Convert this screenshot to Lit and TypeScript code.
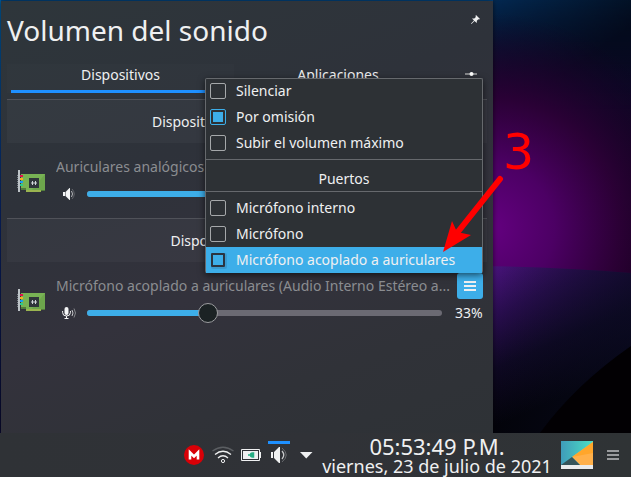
import { LitElement, html, css, svg } from "lit";
import { customElement, property } from "lit/decorators.js";

const cardIcon = svg`
  <path d="M4 4h24v17h-4v1H9v-2H4z" fill="#78b254"/>
  <path d="M28 4v17H14z" fill="#669e47" opacity=".6"/>
  <path d="M4 18h5v2H4zM24 20h4v1h-4z" fill="#507b3b"/>
  <rect x="9" y="20" width="15" height="2" fill="#9ab450"/>
  <rect x="3" y="5" width="3" height="2" fill="#e01050"/>
  <rect x="3" y="8" width="3" height="2" fill="#f6b020"/>
  <rect x="3" y="11" width="3" height="2" fill="#1d99f3"/>
  <rect x="3" y="14" width="3" height="2" fill="#2cc98a"/>
  <path d="M.5 5v13" stroke="#9aa3a9" stroke-dasharray="1 1" opacity=".7"/>
  <rect x="1" y="0" width="2" height="22" fill="#bdc3c7"/>
  <rect x="12" y="8" width="10" height="10" fill="#2f353a"/>
  <path d="M14 13h6M15.500 11v4M18.500 11v4" stroke="#cfd4d8" fill="none"/>`;

@customElement("check-item")
class CheckItem extends LitElement {
  @property() label = "";
  @property({ type: Boolean, reflect: true }) checked = false;
  @property({ type: Boolean, reflect: true }) current = false;
  static styles = css`
    :host { display: flex; align-items: center; height: 26px; padding-left: 4px; color: #eff0f1; }
    .box { box-sizing: border-box; width: 16px; height: 16px; border: 1px solid #a5a8aa; border-radius: 2px; padding: 2px; margin-right: 10px; flex: none; }
    :host([checked]) .box { border-color: #3daee9; }
    :host([checked]) .box::before { content: ""; display: block; width: 10px; height: 10px; background: #3daee9; }
    :host([current]) { background: #3daee9; }
    :host([current]) .box { width: 14px; height: 14px; border: 2px solid #2b3440; border-radius: 1px; margin: 0 11px 0 1px; box-shadow: 1px 1px 0 1px #3a9bd0; }
  `;
  render() { return html`<span class="box"></span><span>${this.label}</span>`; }
}

@customElement("volume-slider")
class VolumeSlider extends LitElement {
  @property({ type: Number }) value = 0;
  static styles = css`
    :host { display: block; flex: none; position: relative; width: 355px; height: 6px; border-radius: 3px; background: #6b6a73; }
    .fill { height: 6px; border-radius: 3px; background: #3daee9; }
    .knob { position: absolute; top: -7px; box-sizing: border-box; width: 20px; height: 20px; margin-left: -10px; border-radius: 50%; background: #1b2224; border: 1px solid #9b9c9f; }
  `;
  render() {
    return html`<div class="fill" style="width:${this.value}%"></div><div class="knob" style="left:${this.value}%"></div>`;
  }
}

@customElement("app-root")
class AppRoot extends LitElement {
  static styles = css`
    :host { display: block; position: relative; box-sizing: border-box; width: 631px; height: 477px; overflow: hidden; font: 14px/20px "Noto Sans", sans-serif; color: #eff0f1; background: #03040b; }
    svg { display: block; flex: none; }
    .wall { position: absolute; inset: 0; }
    .desk { position: relative; height: 433px; box-sizing: border-box; padding: 1px 0 0 1px; }
    .panel { box-sizing: border-box; width: 492px; height: 432px; padding: 0 6px; background: linear-gradient(160deg, #2e363b 0%, #2e323a 35%, #33323c 60%, #303238 80%, #2e3236 100%); box-shadow: 0 0 5px rgba(0,0,0,.6); }
    .head { display: flex; justify-content: space-between; height: 63px; }
    h1 { margin: 9px 0 0; font-size: 28px; line-height: 40px; font-weight: 400; white-space: nowrap; }
    .pin { margin: 14px 7px 0 0; }
    .tabs { display: flex; height: 35px; border-bottom: 1px solid #505259; }
    .tab { width: 227px; text-align: center; height: 29px; line-height: 21px; }
    .tab.on { background: rgba(255,255,255,.012); }
    .tab.on::after { content: ""; display: block; height: 3px; margin: 5px 0 0 4px; width: 222px; background: #1e90ff; }
    .tab.two { width: 208px; }
    .conf { margin: 6px 0 0 23px; }
    .section { display: flex; justify-content: center; height: 43px; line-height: 43px; background: rgba(255,255,255,.03); white-space: nowrap; }
    .section.in { padding-left: 1px; }
    .device { display: flex; height: 75px; }
    .card { margin: 27px 11px 0 10px; }
    .info { width: 427px; }
    .name { height: 28px; display: flex; align-items: center; justify-content: space-between; margin-top: 10px; color: #8b8d91; white-space: nowrap; }
    .name .t { width: 394px; overflow: hidden; }
    .btn { width: 26px; height: 26px; border-radius: 3px; background: #3daee9; display: flex; align-items: center; justify-content: center; }
    .vol { height: 26px; display: flex; align-items: center; }
    .vol .ic { flex: none; width: 25px; margin: 0 0 0 6px; }
    .pct { margin-left: 13px; }
    .rule { height: 1px; background: #505259; }
    .menu { position: absolute; left: 205px; top: 78px; box-sizing: border-box; width: 278px; height: 195px; border: 1px solid #66696d; border-bottom-color: #58bdf0; border-radius: 2px; background: #2d3135; box-shadow: 0 2px 7px rgba(0,0,0,.6); }
    .menu check-item:first-child { margin-top: -1px; }
    .menu .title { height: 31px; line-height: 37px; text-align: center; border: solid #66696d; border-width: 1px 0; margin: 3px 0; }
    .mark { position: absolute; left: 0; top: 0; }
    .three { position: absolute; left: 503px; top: 124px; font: 49px/58px "DejaVu Sans", sans-serif; color: #f00; }
    .bar { position: relative; display: flex; height: 44px; background: linear-gradient(90deg, #2f3236, #303237 50%, #2f3335); }
    .tray { display: flex; align-items: flex-start; padding-left: 184px; width: 134px; }
    .clock { width: 238px; text-align: center; white-space: nowrap; }
    .time { font-size: 22px; line-height: 24px; margin-top: 1px; }
    .date { font-size: 18px; line-height: 18px; margin: -1px -10px 0; }
    .end { display: flex; }
  `;

  device(name: string, mic: boolean, value: number) {
    return html`<div class="device">
      <svg class="card" width="28" height="22" viewBox="0 0 28 22">${cardIcon}</svg>
      <div class="info">
        <div class="name"><span class="t">${name}</span>${mic ? html`<span class="btn"><svg width="12" height="10" viewBox="0 0 12 10"><path d="M0 1h12M0 5h12M0 9h12" stroke="#eff0f1" stroke-width="2"/></svg></span>` : ""}</div>
        <div class="vol"><span class="ic">${mic
          ? html`<svg width="15" height="12" viewBox="0 0 15 12" fill="none" stroke="#f4f5f6"><rect x="2.500" y="0" width="4" height="8" rx="2" fill="#f4f5f6" stroke="none"/><path d="M.6 4v1.500q0 3.500 3.900 3.500t3.900-3.500V4M4.500 9v2.500M2.500 11.500h4"/><path d="M10 3q2 3 0 6" stroke="#c5c6c9"/><path d="M12 1.500q3 4.500 0 9" stroke="#85878b"/></svg>`
          : html`<svg width="14" height="12" viewBox="-1 0 14 12" fill="none"><path d="M0 4h2v4H0zM2.500 4l4-4H7v12h-.5l-4-4z" fill="#f4f5f6"/><path d="M8.500 3q2 3 0 6" stroke="#b8b9bc"/><path d="M9 1q4.500 5 0 10" stroke="#64666b"/></svg>`}</span>
          <volume-slider .value=${value}></volume-slider><span class="pct">${mic ? "33%" : ""}</span></div>
      </div></div>`;
  }

  render() {
    return html`
      <svg class="wall" width="631" height="477" viewBox="0 0 631 477">
        <defs>
          <radialGradient id="p" gradientUnits="userSpaceOnUse" cx="490" cy="228" r="215"><stop offset="0" stop-color="#640080"/><stop offset=".3" stop-color="#4c0064"/><stop offset=".6" stop-color="#2e0038" stop-opacity=".9"/><stop offset="1" stop-color="#180023" stop-opacity="0"/></radialGradient>
          <linearGradient id="t" x1="0" y1="0" x2="1" y2=".25"><stop offset="0" stop-color="#00549a"/><stop offset=".74" stop-color="#033a70"/><stop offset="1" stop-color="#020b18"/></linearGradient>
          <linearGradient id="tf" x1="0" y1="0" x2="0" y2="1"><stop offset="0" stop-color="#fff"/><stop offset="1" stop-color="#000"/></linearGradient>
          <mask id="tm"><rect width="631" height="110" fill="url(#tf)"/></mask>
          <linearGradient id="v" gradientUnits="userSpaceOnUse" x1="485" y1="265" x2="545" y2="405"><stop offset="0" stop-color="#4c1480"/><stop offset=".32" stop-color="#2a0d50"/><stop offset=".65" stop-color="#0e0822"/><stop offset="1" stop-color="#03030a"/></linearGradient>
          <linearGradient id="f" gradientUnits="userSpaceOnUse" x1="493" y1="0" x2="631" y2="0"><stop offset="0" stop-color="#080d20" stop-opacity="0"/><stop offset="1" stop-color="#0a0b22" stop-opacity=".9"/></linearGradient>
          <linearGradient id="l" x1="0" y1="0" x2="0" y2="1"><stop offset="0" stop-color="#005d9f"/><stop offset=".5" stop-color="#09246a"/><stop offset="1" stop-color="#0a0a30"/></linearGradient>
          <linearGradient id="s" x1="0" y1="0" x2="0" y2="1"><stop offset="0" stop-color="#030c1e"/><stop offset=".3" stop-color="#0b0826"/><stop offset="1" stop-color="#120018"/></linearGradient>
        </defs>
        <rect width="631" height="275" fill="url(#s)"/>
        <rect width="631" height="110" fill="url(#t)" mask="url(#tm)" opacity=".6"/>
        <rect width="631" height="290" fill="url(#p)"/>
        <path d="M480 266Q560 267 631 273V440H480z" fill="url(#v)"/>
        <path d="M480 266Q560 267 631 273V380L540 433H493z" fill="url(#f)" opacity=".7"/>
        <path d="M540 433Q575 385 631 346V440H540z" fill="#020003"/>
        <rect width="493" height="1" fill="#00447f"/><rect width="1" height="433" fill="url(#l)"/>
      </svg>
      <div class="desk">
        <div class="panel">
          <div class="head"><h1>Volumen del sonido</h1>
            <svg class="pin" width="9" height="9" viewBox="0 0 9 9"><path d="M5 0l4 4-1 .5-.7-.3-1.500 1.600V8L3.500 6 .5 9 0 8.500l3-3L1 3.500h2.300L4.900 2 4.500 1z" fill="#eff0f1"/></svg></div>
          <div class="tabs"><div class="tab on">Dispositivos</div><div class="tab two">Aplicaciones</div>
            <svg class="conf" width="13" height="8" viewBox="0 0 13 8"><path d="M0 4h12" stroke="#85878a" stroke-width="2"/><circle cx="6.500" cy="4" r="2" fill="#fff"/></svg></div>
          <div class="section">Dispositivos de reproducción</div>
          ${this.device("Auriculares analógicos", false, 50)}
          <div class="rule"></div>
          <div class="section in">Dispositivos de entrada</div>
          ${this.device("Micrófono acoplado a auriculares (Audio Interno Estéreo a...", true, 34)}
        </div>
      </div>
      <div class="bar">
        <div class="tray">
          <svg width="134" height="44" viewBox="184 433 134 44" fill="none">
            <circle cx="194" cy="455" r="10" fill="#d90007"/><path d="M190 459.500v-7l4 4 4-4v7" stroke="#fff" stroke-width="2.600"/>
            <path d="M212.500 451q10.500-7.500 21 0" stroke="#5b5e62" stroke-width="1.300"/><path d="M215 454.500q8-6.500 16 0" stroke="#eff0f1" stroke-width="1.300"/><path d="M218 458q5-4.500 10 0" stroke="#eff0f1" stroke-width="1.300"/><circle cx="223" cy="461" r="1.600" stroke="#eff0f1"/>
            <path d="M241.500 449.500h18v11h-18z" stroke="#eff0f1"/><path d="M243 451h15v8h-15z" fill="#eff0f1"/><path d="M260 452h1v6h-1z" fill="#eff0f1"/><path d="M248 455h3M253.500 453h-1q-2 0-2 2t2 2h1z" stroke="#27ae84" stroke-width="1.500" fill="#27ae84"/>
            <path d="M268 441h22v3h-22z" fill="#1e90ff"/>
            <path d="M271 452h2v6h-2zM274 452l5-5h1v16h-1l-5-5z" fill="#eff0f1"/><path d="M282 451q3.500 4 0 8" stroke="#c8c9cb" stroke-width="1.300"/><path d="M282 448q8.500 7 0 14" stroke="#686a6e"/>
            <path d="M300 452h12.500l-6.250 6.500z" fill="#eff0f1"/>
          </svg>
        </div>
        <div class="clock"><div class="time">05:53:49 P.M.</div><div class="date">viernes, 23 de julio de 2021</div></div>
        <div class="end"><svg width="75" height="44" viewBox="556 433 75 44">
          <defs><linearGradient id="g" x1="0" y1="0" x2="1" y2="0"><stop offset="0" stop-color="#3f9cba"/><stop offset="1" stop-color="#4ce0c4"/></linearGradient></defs>
          <path d="M561 441h32v28h-32z" fill="url(#g)"/><path d="M593 442l-21 15 8 8h13z" fill="#ffb04a"/><path d="M593 442l-21 15 21-4z" fill="#ffa62b"/><path d="M561 465l11-8 8 8z" fill="#35545a"/><path d="M561 465h32v4h-32z" fill="#e9ebec"/>
          <path d="M607 451h12M607 455h12M607 459h12" stroke="#999b9d" stroke-width="2"/></svg></div>
      </div>
      <div class="menu">
        <check-item label="Silenciar"></check-item><check-item label="Por omisión" checked></check-item><check-item label="Subir el volumen máximo"></check-item>
        <div class="title">Puertos</div>
        <check-item label="Micrófono interno"></check-item><check-item label="Micrófono"></check-item><check-item label="Micrófono acoplado a auriculares" current></check-item>
      </div>
      <svg class="mark" width="631" height="477" viewBox="0 0 631 477"><path d="M500 179L457 233" stroke="#f00" stroke-width="6" stroke-linecap="round"/><path d="M443 252l9-31 5 11 14 3z" fill="#f00"/></svg>
      <div class="three">3</div>`;
  }
}
